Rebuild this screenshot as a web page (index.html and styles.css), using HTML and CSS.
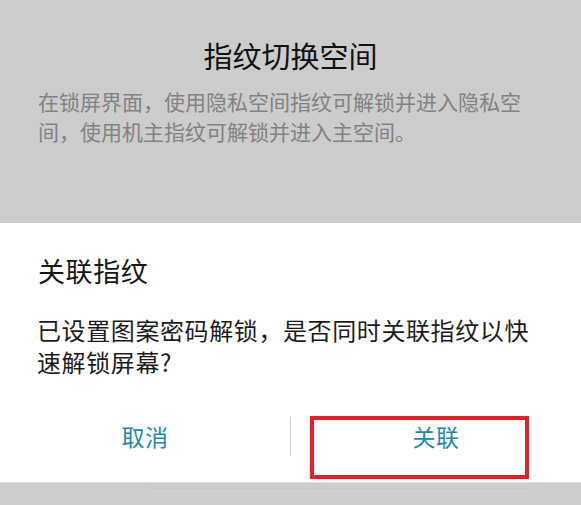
FILE: index.html
```html
<!DOCTYPE html>
<html lang="zh-CN">
<head>
<meta charset="utf-8">
<title>关联指纹</title>
<link rel="stylesheet" href="styles.css">
</head>
<body>
<div class="screen">
  <section class="top">
    <h1 class="top-title">指纹切换空间</h1>
    <p class="top-desc">在锁屏界面，使用隐私空间指纹可解锁并进入隐私空间，使用机主指纹可解锁并进入主空间。</p>
  </section>
  <section class="dialog">
    <h2 class="dialog-title">关联指纹</h2>
    <p class="dialog-body">已设置图案密码解锁，是否同时关联指纹以快速解锁屏幕?</p>
    <div class="actions">
      <div class="btn">取消</div>
      <div class="divider"></div>
      <div class="btn">关联</div>
    </div>
    <div class="highlight"></div>
  </section>
  <section class="bottom">
    <div class="ghost"></div>
  </section>
</div>
</body>
</html>
```
FILE: styles.css
```css
html, body {
  margin: 0;
  padding: 0;
}
body {
  width: 581px;
  height: 505px;
  overflow: hidden;
  background: #cdcdcd;
  font-family: "Noto Sans CJK SC", "Noto Sans", sans-serif;
}
.screen {
  display: flex;
  flex-direction: column;
  height: 505px;
}
.top {
  height: 223px;
  box-sizing: border-box;
  background: #cccccc;
  padding-top: 36px;
}
.top-title {
  margin: 0;
  text-align: center;
  font-size: 29px;
  font-weight: 400;
  line-height: 38px;
  letter-spacing: 0;
  color: #111111;
}
.top-desc {
  margin: 12px 0 0 0;
  padding: 0 55px 0 38px;
  font-size: 21px;
  line-height: 30px;
  letter-spacing: 0;
  color: #828282;
}
.dialog {
  position: relative;
  height: 259px;
  box-sizing: border-box;
  background: #ffffff;
  padding-top: 30px;
}
.dialog-title {
  margin: 0;
  padding-left: 38px;
  font-size: 27px;
  font-weight: 400;
  line-height: 36px;
  letter-spacing: 0.6px;
  color: #161616;
}
.dialog-body {
  margin: 25px 0 0 0;
  padding: 0 43px 0 37px;
  font-size: 24px;
  line-height: 32px;
  letter-spacing: 0.6px;
  color: #1c1c1c;
}
.actions {
  display: flex;
  align-items: center;
  height: 64px;
  margin-top: 26px;
}
.btn {
  flex: 1;
  text-align: center;
  font-size: 23px;
  line-height: 64px;
  letter-spacing: 0.5px;
  color: #1d8aa6;
}
.divider {
  width: 1px;
  height: 39px;
  background: #d2d2d2;
}
.highlight {
  position: absolute;
  left: 310px;
  top: 193px;
  width: 219px;
  height: 63px;
  box-sizing: border-box;
  border: 4px solid #ec1c27;
}
.bottom {
  flex: 1;
  border-top: 1px solid #dadada;
  background: #cdcdcd;
}
.ghost {
  margin-left: 145px;
  width: 385px;
  height: 5px;
  border-left: 1px solid #c6c6c6;
  border-bottom: 1px solid #c6c6c6;
  border-bottom-left-radius: 6px;
}
```
